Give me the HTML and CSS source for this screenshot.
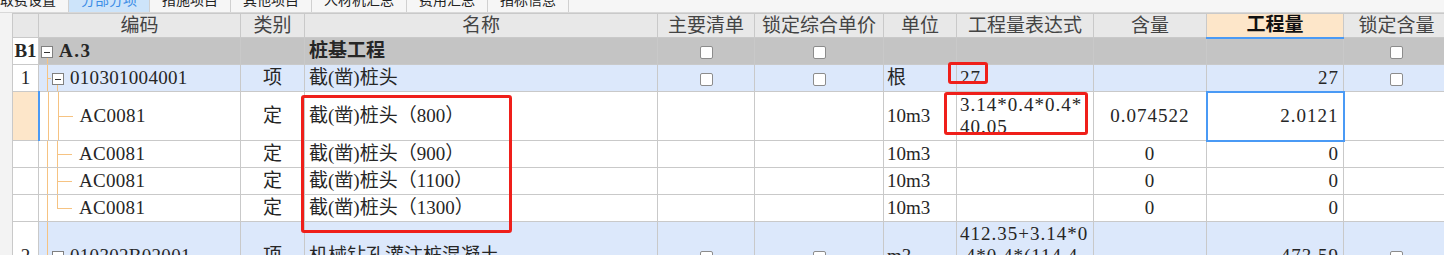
FILE: index.html
```html
<!DOCTYPE html>
<html lang="zh-CN">

<head>
    <meta charset="UTF-8">
    <title>分部分项</title>
    <link rel="stylesheet" href="styles.css">
</head>

<body>
    <!-- 顶部页签 -->
    <div class="tabs">
        <div class="tab first"><span>取费设置</span></div>
        <div class="tab on"><span>分部分项</span></div>
        <div class="tab"><span>措施项目</span></div>
        <div class="tab"><span>其他项目</span></div>
        <div class="tab"><span>人材机汇总</span></div>
        <div class="tab"><span>费用汇总</span></div>
        <div class="tab"><span>指标信息</span></div>
    </div>

    <div class="main">
        <table class="grid">
            <colgroup>
                <col class="c-no">
                <col class="c-code">
                <col class="c-type">
                <col class="c-name">
                <col class="c-main">
                <col class="c-lock">
                <col class="c-unit">
                <col class="c-exp">
                <col class="c-rate">
                <col class="c-qty">
                <col class="c-lockrate">
            </colgroup>
            <thead>
                <tr class="head">
                    <th></th>
                    <th>编码</th>
                    <th>类别</th>
                    <th>名称</th>
                    <th>主要清单</th>
                    <th>锁定综合单价</th>
                    <th>单位</th>
                    <th>工程量表达式</th>
                    <th>含量</th>
                    <th class="hl">工程量</th>
                    <th>锁定含量</th>
                </tr>
            </thead>
            <tbody>
                <tr class="grp">
                    <td class="no b">B1</td>
                    <td class="code lv0 tr-root"><span class="box"></span><b class="sect">A.3</b></td>
                    <td></td>
                    <td class="name"><b>桩基工程</b></td>
                    <td class="mid"><span class="cb"></span></td>
                    <td class="mid"><span class="cb"></span></td>
                    <td></td>
                    <td></td>
                    <td></td>
                    <td></td>
                    <td class="mid"><span class="cb"></span></td>
                </tr>
                <tr class="bill">
                    <td class="no">1</td>
                    <td class="code lv1 tr-open"><span class="box"></span>010301004001</td>
                    <td class="mid">项</td>
                    <td class="name">截(凿)桩头</td>
                    <td class="mid"><span class="cb"></span></td>
                    <td class="mid"><span class="cb"></span></td>
                    <td class="unit">根</td>
                    <td class="exp">27</td>
                    <td></td>
                    <td class="num">27</td>
                    <td class="mid"><span class="cb"></span></td>
                </tr>
                <tr class="quota tall">
                    <td class="no cur"></td>
                    <td class="code lv2 tr-leaf">AC0081</td>
                    <td class="mid">定</td>
                    <td class="name">截(凿)桩头（800）</td>
                    <td></td>
                    <td></td>
                    <td class="unit">10m3</td>
                    <td class="exp">3.14*0.4*0.4*<br>40.05</td>
                    <td class="mid rate">0.074522</td>
                    <td class="num sel">2.0121</td>
                    <td></td>
                </tr>
                <tr class="quota">
                    <td class="no"></td>
                    <td class="code lv2 tr-leaf">AC0081</td>
                    <td class="mid">定</td>
                    <td class="name">截(凿)桩头（900）</td>
                    <td></td>
                    <td></td>
                    <td class="unit">10m3</td>
                    <td class="exp"></td>
                    <td class="mid rate">0</td>
                    <td class="num">0</td>
                    <td></td>
                </tr>
                <tr class="quota">
                    <td class="no"></td>
                    <td class="code lv2 tr-leaf">AC0081</td>
                    <td class="mid">定</td>
                    <td class="name">截(凿)桩头（1100）</td>
                    <td></td>
                    <td></td>
                    <td class="unit">10m3</td>
                    <td class="exp"></td>
                    <td class="mid rate">0</td>
                    <td class="num">0</td>
                    <td></td>
                </tr>
                <tr class="quota">
                    <td class="no"></td>
                    <td class="code lv2 tr-last">AC0081</td>
                    <td class="mid">定</td>
                    <td class="name">截(凿)桩头（1300）</td>
                    <td></td>
                    <td></td>
                    <td class="unit">10m3</td>
                    <td class="exp"></td>
                    <td class="mid rate">0</td>
                    <td class="num">0</td>
                    <td></td>
                </tr>
                <tr class="bill big">
                    <td class="no">2</td>
                    <td class="code lv1 tr-open"><span class="box"></span>010302B02001</td>
                    <td class="mid">项</td>
                    <td class="name">机械钻孔灌注桩混凝土</td>
                    <td class="mid"><span class="cb"></span></td>
                    <td class="mid"><span class="cb"></span></td>
                    <td class="unit">m3</td>
                    <td class="exp">412.35+3.14*0<br>.4*0.4*(114.4<br>-1.5)</td>
                    <td></td>
                    <td class="num">473.59</td>
                    <td class="mid"><span class="cb"></span></td>
                </tr>
            </tbody>
        </table>
    </div>

    <!-- 红色标注框 -->
    <div class="mark mark-name"></div>
    <div class="mark mark-27"></div>
    <div class="mark mark-exp"></div>
</body>

</html>
```

FILE: styles.css
```css
* {
    padding: 0;
    margin: 0;
    box-sizing: border-box;
}

body {
    width: 1444px;
    height: 255px;
    overflow: hidden;
    position: relative;
    background-color: #f3f3f3;
    font-family: "Liberation Serif", "Noto Sans CJK SC", serif;
    font-size: 19px;
    color: #262626;
}

/* 页签 */
.tabs {
    display: flex;
    height: 13px;
    overflow: hidden;
    background-color: #f6f6f6;
    border-bottom: 1px solid #d8d8d8;
}

.tab {
    height: 12px;
    overflow: hidden;
    padding: 0 12px;
    border-right: 1px solid #d0d0d0;
    font-family: "Noto Sans CJK SC", sans-serif;
    font-size: 14px;
    line-height: 14px;
    color: #222;
}

.tab span {
    display: block;
    margin-top: -8px;
}

.tab.first {
    padding-left: 0;
}

.tab.on {
    background-color: #cde4fa;
    color: #3b8de6;
}

/* 表格 */
.main {
    display: flex;
    padding-left: 12px;
}

.grid {
    border-collapse: collapse;
    table-layout: fixed;
    width: 1437px;
    background-color: #fff;
    line-height: 22px;
}

.c-no { width: 26px; }
.c-code { width: 202px; }
.c-type { width: 64px; }
.c-name { width: 353px; }
.c-main { width: 97px; }
.c-lock { width: 129px; }
.c-unit { width: 73px; }
.c-exp { width: 137px; }
.c-rate { width: 113px; }
.c-qty { width: 137px; }
.c-lockrate { width: 106px; }

.grid th,
.grid td {
    border: 1px solid #c9c9c9;
    padding: 0 4px;
    white-space: nowrap;
    overflow: hidden;
    vertical-align: middle;
    font-weight: normal;
    text-align: left;
}

.head {
    height: 24px;
}

.grid th {
    background-color: #e8e8e8;
    color: #444;
    text-align: center;
}

.grid th.hl {
    background-color: #fde6c9;
    color: #111;
    font-weight: bold;
    border-bottom: 2px solid #4a9af5;
}

.grp,
.bill,
.quota {
    height: 27px;
}

.quota.tall {
    height: 49px;
}

.bill.big {
    height: 68px;
}

.grp td {
    background-color: #c4c4c4;
}

.bill td {
    background-color: #dce8fb;
}

.grid td.no {
    background-color: #fff;
    text-align: center;
    padding: 0;
}

.grid td.no.b {
    font-weight: bold;
}

.grid td.cur {
    background-color: #fde6c9;
    border-right: 2px solid #4a9af5;
}

.mid {
    text-align: center !important;
}

.name {
    padding-left: 4px;
}

.unit {
    padding-left: 3px !important;
}

/* 宋体数字较宽，用字距补一点 */
.exp {
    padding-left: 3px !important;
    white-space: normal !important;
    letter-spacing: 1px;
}

.num,
.rate {
    letter-spacing: 1px;
}

.num {
    text-align: right !important;
}

.grid td.sel {
    border: 2px solid #4a9af5;
}

/* 树形编码列 */
.code {
    background-repeat: no-repeat;
    letter-spacing: 0.3px;
}

.sect {
    letter-spacing: 1.5px;
}

.grid td.lv0 { padding-left: 2px; }
.grid td.lv1 { padding-left: 13px; }
.grid td.lv2 { padding-left: 40px; }

.tr-root {
    background-image: linear-gradient(#f6c382, #f6c382);
    background-size: 1px 8px;
    background-position: 8px 100%;
}

.tr-open {
    background-image: linear-gradient(#f6c382, #f6c382), linear-gradient(#f6c382, #f6c382), linear-gradient(#f6c382, #f6c382);
    background-size: 1px 100%, 4px 1px, 1px 8px;
    background-position: 8px 0, 8px 50%, 18px 100%;
}

.tr-leaf {
    background-image: linear-gradient(#f6c382, #f6c382), linear-gradient(#f6c382, #f6c382), linear-gradient(#f6c382, #f6c382);
    background-size: 1px 100%, 1px 100%, 15px 1px;
    background-position: 8px 0, 18px 0, 18px 50%;
}

.tr-last {
    background-image: linear-gradient(#f6c382, #f6c382), linear-gradient(#f6c382, #f6c382), linear-gradient(#f6c382, #f6c382);
    background-size: 1px 100%, 1px 50%, 15px 1px;
    background-position: 8px 0, 18px 0, 18px 50%;
}

.box {
    display: inline-block;
    width: 12px;
    height: 12px;
    margin-right: 6px;
    vertical-align: -1px;
    border: 1px solid #808080;
    background: #fff linear-gradient(#333, #333) no-repeat center / 6px 1px;
}

.cb {
    display: inline-block;
    width: 13px;
    height: 13px;
    vertical-align: middle;
    border: 1px solid #8c8c8c;
    border-radius: 2px;
    background-color: #fff;
}

/* 标注 */
.mark {
    position: absolute;
    border: 3px solid #ef1f1a;
    border-radius: 3px;
}

.mark-name {
    left: 301px;
    top: 95px;
    width: 211px;
    height: 138px;
}

.mark-27 {
    left: 948px;
    top: 62px;
    width: 40px;
    height: 22px;
}

.mark-exp {
    left: 944px;
    top: 92px;
    width: 144px;
    height: 43px;
}
```
